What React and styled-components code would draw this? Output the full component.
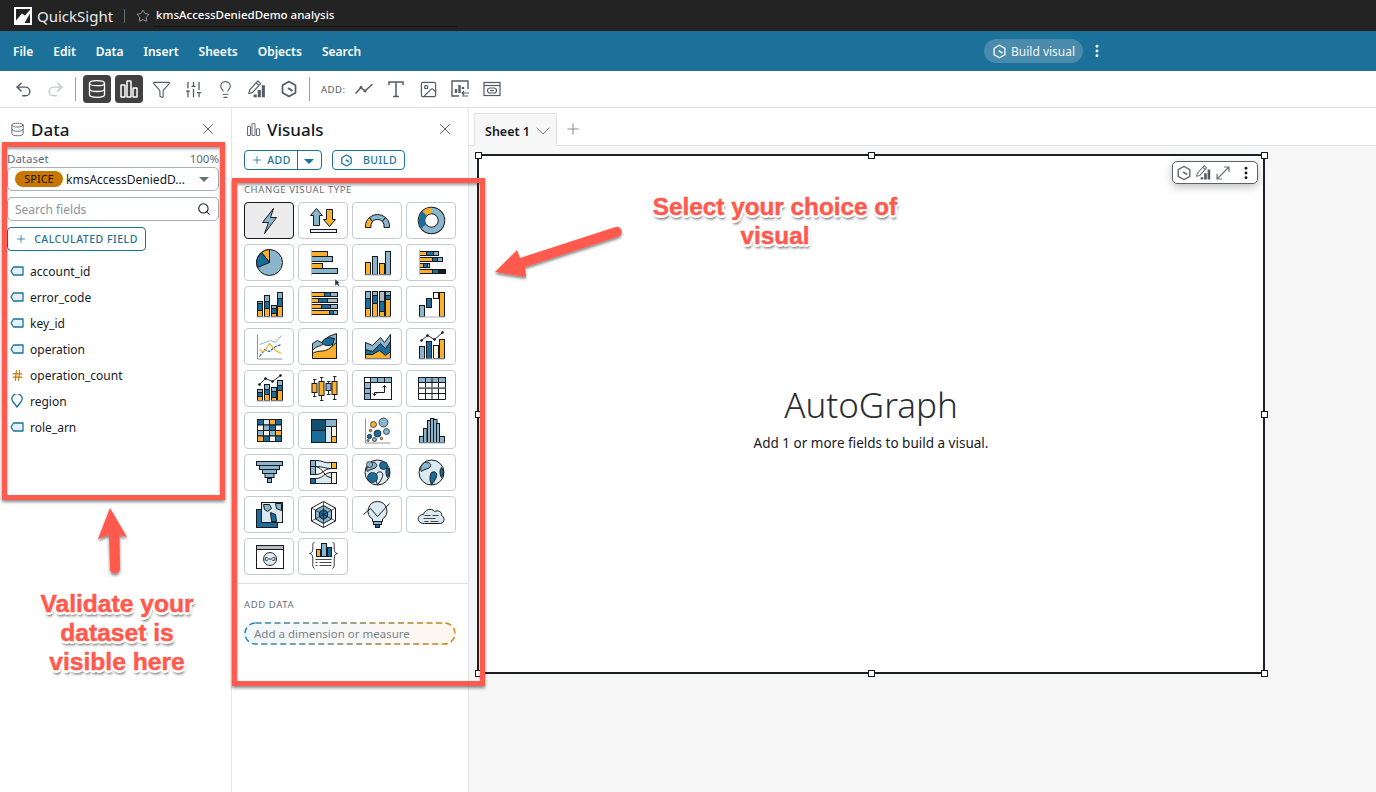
import React from 'react';
import styled, { createGlobalStyle } from 'styled-components';
import {
	ChevronDown, Database, EllipsisVertical, Funnel, Hash, Image, Lightbulb, Plus,
	Redo2, Search, SlidersVertical, Star, Undo2, X,
} from 'lucide-react';

const K = '#16191f';
const O = '#fbb02d';
const B = '#8ab5cb';
const D = '#1a6d99';
const C = '#fbf3e3';
const G = '#b4bcc2';
const L = '#dbeaf1';
const RED = '#ff5a4e';
const BLUE = '#1b7199';

const GlobalStyle = createGlobalStyle`
	html, body { margin: 0; padding: 0; background: #fff; }
	* { box-sizing: border-box; }
	body { font-family: "Noto Sans", "Open Sans", Arial, sans-serif; color: ${K}; }
`;

/* small drawing helpers for the visual type icons */
const R = ({ x, y, w, h, f = B }) => <rect x={x} y={y} width={w} height={h} fill={f} stroke={K} strokeWidth="1" />;
const P = ({ d, f = 'none', s = K, w = 1 }) => <path d={d} fill={f} stroke={s} strokeWidth={w} strokeLinejoin="round" />;
const Dot = ({ x, y, r = 1, f = K }) => <circle cx={x} cy={y} r={r} fill={f} stroke={K} strokeWidth="0.7" />;
const Base = () => <path d="M2 27.5H28.5" stroke={G} strokeWidth="1.2" />;
const Axis = () => <path d="M3 3V27.5H28" fill="none" stroke="#8d969d" strokeWidth="1" />;

const VStack = ({ x, w, segs, base = 27 }) => {
	let y = base;
	return segs.map(([h, f], i) => {
		y -= h;
		return <R key={i} x={x} y={y} w={w} h={h} f={f} />;
	});
};

const HStack = ({ y, h, segs, left = 3 }) => {
	let x = left;
	return segs.map(([w, f], i) => {
		const part = <R key={i} x={x} y={y} w={w} h={h} f={f} />;
		x += w;
		return part;
	});
};

const Globe = ({ spots }) => (
	<>
		<circle cx="15" cy="15" r="12.5" fill={L} stroke={K} strokeWidth="1" />
		<P d="M8 5C12 4 15 6 14 9C12 12 8 11 5 14C3 11 5 7 8 5Z" f={B} />
		<P d="M15 15C19 13 21 16 20 19C19 22 17 25 15 27C13 23 13 18 15 15Z" f={spots ? L : D} />
		<P d="M25 10C28 13 27 18 25 20C23 17 23 12 25 10Z" f={D} />
		{spots && <Dot x={21} y={8} r={4} f={D} />}
		{spots && <Dot x={10} y={20} r={5} f={D} />}
		{spots && <Dot x={7} y={7} r={3} f={B} />}
	</>
);

const VISUAL_ICONS = [
	<P d="M19 3L8 17H14L10 28L22 12H16Z" f={B} w={1} />,
	<>
		<P d="M8 3L14 10H11V20H5V10H2Z" f={B} />
		<P d="M21 21L27 14H24V4H18V14H15Z" f={O} />
		<R x={2} y={24} w={26} h={3} f="#eef2f4" />
	</>,
	<>
		<P d="M3 22A12 12 0 0 1 7 12L10 16A7 7 0 0 0 8.5 22Z" f={O} />
		<P d="M7 12A12 12 0 0 1 23 12L20 16A7 7 0 0 0 10 16Z" f={B} />
		<P d="M23 12A12 12 0 0 1 27 22H21.5A7 7 0 0 0 20 16Z" f={B} />
	</>,
	<>
		<circle cx="15" cy="15" r="10" fill="none" stroke={K} strokeWidth="7.5" />
		<circle cx="15" cy="15" r="10" fill="none" stroke={B} strokeWidth="5.6" />
		<path d="M15 5A10 10 0 0 0 8 8" fill="none" stroke={O} strokeWidth="5.6" />
		<path d="M8 8A10 10 0 0 0 7 21" fill="none" stroke={D} strokeWidth="5.6" />
	</>,
	<>
		<circle cx="15" cy="15" r="13" fill={B} stroke={K} strokeWidth="1" />
		<P d="M15 15L15 2A13 13 0 0 0 7 5Z" f={O} />
		<P d="M15 15L7 5A13 13 0 0 0 3 20Z" f={D} />
	</>,
	<>
		<R x={3} y={4} w={16} h={5} f={O} />
		<R x={3} y={9} w={21} h={5} f={B} />
		<R x={3} y={16} w={11} h={5} f={O} />
		<R x={3} y={21} w={26} h={5} f={B} />
		<path d="M3 2V28" stroke={G} strokeWidth="1.2" />
	</>,
	<>
		<R x={3} y={15} w={5} h={12} f={O} />
		<R x={10} y={9} w={5} h={18} f={B} />
		<R x={17} y={16} w={5} h={11} f={O} />
		<R x={23} y={4} w={5} h={23} f={B} />
		<Base />
	</>,
	<>
		<HStack y={4} h={4} segs={[[7, O], [7, D], [5, B]]} />
		<HStack y={10} h={4} segs={[[13, O], [5, D], [5, B]]} />
		<HStack y={16} h={4} segs={[[4, O], [4, D], [2, B]]} />
		<HStack y={22} h={4} segs={[[13, O], [6, D], [7, K]]} />
		<path d="M3 2V28" stroke={G} strokeWidth="1.2" />
	</>,
	<>
		<VStack x={3} w={5} segs={[[6, O], [7, D], [2, B]]} />
		<VStack x={10} w={5} segs={[[8, O], [7, D], [6, B]]} />
		<VStack x={17} w={5} segs={[[3, O], [5, D], [3, B]]} />
		<VStack x={23} w={5} segs={[[10, O], [8, D], [6, B]]} />
		<Base />
	</>,
	<>
		<HStack y={3} h={4} segs={[[13, O], [6, D], [7, B]]} />
		<HStack y={9} h={4} segs={[[7, O], [9, D], [10, G]]} />
		<HStack y={15} h={4} segs={[[10, O], [9, D], [7, B]]} />
		<HStack y={21} h={4} segs={[[18, O], [4, D], [4, B]]} />
		<path d="M3 1V27" stroke={G} strokeWidth="1.2" />
	</>,
	<>
		<VStack x={3} w={5} segs={[[8, O], [10, D], [7, B]]} />
		<VStack x={10} w={5} segs={[[13, O], [8, D], [4, B]]} />
		<VStack x={17} w={5} segs={[[5, O], [10, D], [10, G]]} />
		<VStack x={23} w={5} segs={[[17, O], [4, D], [4, B]]} />
		<Base />
	</>,
	<>
		<R x={3} y={16} w={5} h={11} f={B} />
		<R x={10} y={9} w={5} h={9} f={D} />
		<R x={17} y={3} w={5} h={6} f={C} />
		<R x={23} y={3} w={5} h={24} f={O} />
		<Base />
	</>,
	<>
		<Axis />
		<path d="M5 13L11 11L16 9L21 11L27 4" fill="none" stroke={B} strokeWidth="1" />
		<path d="M5 25L10 18L15 20L21 15L27 13" fill="none" stroke={D} strokeWidth="1.2" strokeDasharray="3 1" />
		<path d="M5 18L9 21L15 12L21 19L27 22" fill="none" stroke={O} strokeWidth="1.2" />
	</>,
	<>
		<P d="M4 27V12L9 9L13 11L20 5L28 2V27Z" f={B} />
		<P d="M4 19C8 14 12 15 14 13C17 8 22 8 24 11V27H4Z" f={C} />
		<P d="M13 11C17 5 22 6 26 7L24 13C20 15 15 14 13 11Z" f={D} />
		<P d="M4 27V22C9 19 13 20 17 19C21 18 24 14 28 11V27Z" f={O} />
	</>,
	<>
		<P d="M3 27V11L10 14L18 6L22 11L28 3V27Z" f={B} />
		<P d="M3 27V18L10 20L18 12L23 17L28 10V27Z" f={D} />
		<P d="M3 27V23L10 23L17 19L23 24L28 20V27Z" f={O} />
		<Base />
	</>,
	<>
		<R x={3} y={15} w={5} h={12} f={B} />
		<R x={10} y={10} w={5} h={17} f={D} />
		<R x={17} y={14} w={5} h={13} f={C} />
		<R x={23} y={8} w={5} h={19} f={O} />
		<path d="M5 9L11 4L18 8L26 1" fill="none" stroke={K} strokeWidth="0.9" />
		<Dot x={5} y={9} /><Dot x={11} y={4} /><Dot x={18} y={8} /><Dot x={26} y={1} />
		<Base />
	</>,
	<>
		<VStack x={3} w={5} segs={[[4, O], [4, D], [3, B]]} />
		<VStack x={10} w={5} segs={[[6, O], [5, D], [5, B]]} />
		<VStack x={17} w={5} segs={[[3, O], [6, D], [4, B]]} />
		<VStack x={23} w={5} segs={[[10, O], [5, D], [5, B]]} />
		<path d="M5 11L11 5L18 8L26 2" fill="none" stroke={K} strokeWidth="0.9" />
		<Dot x={5} y={11} /><Dot x={11} y={5} /><Dot x={18} y={8} /><Dot x={26} y={2} />
		<Base />
	</>,
	<>
		<path d="M6 6V23M13 4V27M20 8V21M26 3V26M4.5 6H8M11.5 4H15M18.5 8H22M24.5 3H28M4.5 23H8M11.5 27H15M18.5 21H22M24.5 26H28" stroke={K} strokeWidth="0.9" fill="none" />
		<R x={3.5} y={10} w={5} h={9} f={O} />
		<R x={10.5} y={8} w={5} h={14} f={O} />
		<R x={17.5} y={10} w={5} h={7} f={B} />
		<R x={23.5} y={8} w={5} h={13} f={O} />
	</>,
	<>
		<R x={2} y={4} w={27} h={22} f="#fff" />
		<R x={2} y={4} w={6} h={5} f="#fff" />
		<R x={8} y={4} w={7} h={5} f={B} />
		<R x={15} y={4} w={7} h={5} f={B} />
		<R x={22} y={4} w={7} h={5} f={B} />
		<R x={2} y={9} w={6} h={6} f={B} />
		<R x={2} y={15} w={6} h={5} f={B} />
		<R x={2} y={20} w={6} h={6} f={B} />
		<P d="M12 22V19H22V12M20 14L22 12L24 14M14 20L12 22L10 20" w={1} />
	</>,
	<>
		<R x={2} y={4} w={27} h={5} f={B} />
		<path d="M2 9H29V26H2ZM2 15H29M2 20H29M9 4V26M15.5 4V26M22 4V26" fill="none" stroke={K} strokeWidth="1" />
		<path d="M2 14.5H29" stroke="#777" strokeWidth="1.6" />
	</>,
	<>
		{[
			[D, L, O, D], [C, B, D, C], [B, C, B, O], [O, D, C, D],
		].map((row, y) => row.map((f, x) => <R key={`${x}-${y}`} x={3 + x * 6} y={4 + y * 5.5} w={6} h={5.5} f={f} />))}
	</>,
	<>
		<R x={3} y={4} w={14} h={11} f="#134f6e" />
		<R x={3} y={15} w={14} h={12} f={D} />
		<R x={17} y={4} w={11} h={7} f={B} />
		<R x={17} y={11} w={6} h={16} f={L} />
		<R x={23} y={11} w={5} h={10} f={C} />
		<R x={23} y={21} w={5} h={6} f={O} />
	</>,
	<>
		<Axis />
		<Dot x={11} y={9} r={3} f={O} />
		<Dot x={21} y={7} r={4.5} f={B} />
		<Dot x={8} y={15} r={1.2} f={O} />
		<Dot x={15} y={18} r={3.5} f={D} />
		<Dot x={24} y={16} r={3} f={B} />
		<Dot x={7} y={21} r={2.2} f={D} />
		<Dot x={12} y={24} r={2} f={B} />
		<Dot x={19} y={23} r={1.2} f={O} />
		<Dot x={5.5} y={25} r={1} f={O} />
	</>,
	<>
		{[[3, 21], [7, 13], [11, 5], [14, 3], [17, 4], [20, 8], [23, 21]].map(([x, y], i) => (
			<R key={i} x={x} y={y} w={i === 6 ? 5 : i === 0 ? 4 : i === 5 ? 3 : 3.5} h={27 - y} f={B} />
		))}
		<Base />
	</>,
	<>
		<R x={2} y={4} w={26} h={4} f={B} />
		<R x={5} y={8} w={20} h={4} f={B} />
		<R x={8} y={12} w={14} h={4} f={B} />
		<R x={10.5} y={16} w={9} h={4} f={B} />
		<R x={13} y={21} w={4} h={4} f={B} />
	</>,
	<>
		<R x={2} y={3} w={5} h={6} f={B} />
		<R x={2} y={9} w={5} h={8} f={B} />
		<R x={2} y={21} w={5} h={5} f={D} />
		<R x={23} y={5} w={5} h={6} f={O} />
		<R x={23} y={15} w={5} h={11} f={C} />
		<P d="M7 3C15 3 15 6 23 5V11C15 11 15 9 7 9Z" f={L} />
		<P d="M7 21C15 21 15 15 23 15V26C15 26 15 26 7 26Z" f={L} />
		<P d="M7 9C15 10 15 20 23 20M7 17C15 17 15 11 23 11" />
	</>,
	<Globe spots />,
	<Globe />,
	<>
		<R x={2} y={10} w={21} h={18} f={D} />
		<R x={7} y={3} w={21} h={20} f={L} />
		<P d="M9 5H15L17 9L13 12L10 10Z" f={B} />
		<P d="M16 13L21 15L22 22H17Z" f={D} />
		<P d="M21 4H27V11L22 9Z" f={B} />
	</>,
	<>
		<P d="M15 2L27 8.5V21.5L15 28L3 21.5V8.5Z" f="#fff" />
		<P d="M15 6L23 10.5V19.5L15 24L7 19.5V10.5Z" f={B} />
		<P d="M15 10L19 12.5V17.5L15 20L11 17.5V12.5Z" f={D} />
		<path d="M15 2V28M3 8.5L27 21.5M27 8.5L3 21.5" stroke={K} strokeWidth="0.7" />
	</>,
	<>
		<P d="M15 2A9.5 9.5 0 0 1 20 19.5V22H10V19.5A9.5 9.5 0 0 1 15 2Z" f={L} />
		<R x={11} y={22} w={8} h={3} f={B} />
		<R x={13} y={25} w={4} h={3} f={D} />
		<path d="M1 15L8 9L15 17L27 4" fill="none" stroke={K} strokeWidth="1" />
	</>,
	<>
		<P d="M8 24C3 24 1 21 2 18C3 15 6 15 7 15C8 10 15 8 18 12C22 10 26 13 25 16C28 17 29 23 24 24Z" f={L} />
		<path d="M8 16H14M16 16H22M7 19H19M8 22H12M14 22H22" stroke={K} strokeWidth="0.8" />
	</>,
	<>
		<R x={2} y={4} w={27} h={4} f={G} />
		<R x={2} y={8} w={27} h={19} f="#fff" />
		<circle cx="15.5" cy="17.5" r="6.5" fill={L} stroke={K} strokeWidth="0.9" />
		<path d="M13 16H12A1.5 1.5 0 0 0 12 19H13M18 16H19A1.5 1.5 0 0 1 19 19H18M13 17.5H18" fill="none" stroke={K} strokeWidth="0.9" />
	</>,
	<>
		<P d="M6 1C3 1 5 6 4 9C4 11 2 12 1 12C2 12 4 13 4 15C5 19 3 26 6 27M24 1C27 1 25 6 26 9C26 11 28 12 29 12C28 12 26 13 26 15C25 19 27 26 24 27" w={0.9} />
		<R x={8} y={8} w={4} h={7} f={O} />
		<R x={13} y={2} w={5} h={13} f={B} />
		<R x={19} y={6} w={4} h={9} f={D} />
		<path d="M7 18H23M7 21H9M11 21H23M7 24H9M11 24H23" stroke={K} strokeWidth="0.8" />
	</>,
];

const FIELDS = [
	['account_id', 'tag'], ['error_code', 'tag'], ['key_id', 'tag'], ['operation', 'tag'],
	['operation_count', 'hash'], ['region', 'pin'], ['role_arn', 'tag'],
];

const MENU = ['File', 'Edit', 'Data', 'Insert', 'Sheets', 'Objects', 'Search'];

const HexBuild = ({ size = 18, color = 'currentColor' }) => (
	<svg width={size} height={size} viewBox="0 0 18 18" fill="none" stroke={color} strokeWidth="1.700" strokeLinejoin="round">
		<path d="M9 1.500L15.500 5.200V12.800L9 16.500L2.500 12.800V5.200Z" />
		<path d="M8 8L12.500 10.800" strokeWidth="2" />
	</svg>
);

const PenBars = ({ size = 22 }) => (
	<svg width={size} height={size} viewBox="0 0 22 22" fill="none" stroke="currentColor" strokeWidth="1.300" strokeLinejoin="round">
		<path d="M2 16L3 12L12 2L15 5L6 15Z" />
		<path d="M10 4L13 7" />
		<path d="M9 20V17M13.500 20V12M18 20V7" strokeWidth="3.400" stroke="#545b64" />
	</svg>
);

const BarsIcon = ({ size = 20, color = 'currentColor', width = 1.500 }) => (
	<svg width={size} height={size} viewBox="0 0 20 20" fill="none" stroke={color} strokeWidth={width}>
		<rect x="2" y="6" width="4" height="12" rx="0.500" />
		<rect x="8" y="2" width="4" height="16" rx="0.500" />
		<rect x="14" y="9" width="4" height="9" rx="0.500" />
	</svg>
);

const TagIcon = () => (
	<svg width="14" height="12" viewBox="0 0 14 12" fill="#e4f0f6" stroke={BLUE} strokeWidth="1.300" strokeLinejoin="round">
		<path d="M3.500 2H13V10H3.500L1 6Z" />
	</svg>
);

const PinIcon = () => (
	<svg width="12" height="14" viewBox="0 0 12 14" fill="#fff" stroke={BLUE} strokeWidth="1.300" strokeLinejoin="round">
		<path d="M6 13L1.800 7.500A5 5 0 1 1 10.200 7.500Z" />
	</svg>
);

const LogoMark = () => (
	<svg width="18" height="18" viewBox="0 0 18 18">
		<rect width="18" height="18" fill="#fff" />
		<path d="M2 2H16V3L11 8.500L8 6.500L2 13.500Z" fill="#232323" />
		<path d="M16 6.500V16H10.500Z" fill="#232323" />
	</svg>
);

const LineAdd = () => (
	<svg width="18" height="18" viewBox="0 0 18 18" fill="none" stroke="#545b64" strokeWidth="1.500" strokeLinecap="round" strokeLinejoin="round">
		<path d="M1 13L6 7.500L10 11L17 4.500" />
		<circle cx="6" cy="7.500" r="0.700" fill="#545b64" />
		<circle cx="10" cy="11" r="0.700" fill="#545b64" />
	</svg>
);

const SerifT = () => (
	<svg width="18" height="18" viewBox="0 0 18 18" fill="none" stroke="#545b64" strokeWidth="1.500" strokeLinejoin="miter">
		<path d="M2 5V2H16V5M9 2V16.500M6 16.500H12" />
	</svg>
);

const ChartSwap = () => (
	<svg width="20" height="20" viewBox="0 0 20 20" fill="none" stroke="#545b64" strokeWidth="1.400">
		<path d="M9 17H2V2H18V10" />
		<path d="M6 14V10M9.500 14V6M13 10V8" strokeWidth="2.400" />
		<path d="M12 14H19M14 12L12 14L14 16M12 17H18" strokeWidth="1.100" />
	</svg>
);

const EmbedIcon = () => (
	<svg width="18" height="18" viewBox="0 0 18 18" fill="none" stroke="#545b64" strokeWidth="1.200">
		<rect x="1" y="2.500" width="16" height="13" />
		<path d="M1 5.500H17" />
		<rect x="4.500" y="8" width="9" height="5" rx="2.500" />
		<path d="M7 10.500H11" />
	</svg>
);

const Page = styled.div`
	position: relative;
	width: 1376px;
	height: 792px;
	overflow: hidden;
	display: flex;
	flex-direction: column;
	background: #fff;
`;

const TopBar = styled.header`
	height: 31px;
	background: #232323;
	display: flex;
	align-items: center;
	padding-left: 14px;
	color: #fff;
`;

const Brand = styled.span`
	font-size: 15px;
	margin-left: 5px;
	color: #eaeaea;
`;

const BarDivider = styled.span`
	width: 1px;
	height: 14px;
	background: #6b6b6b;
	margin: 0 11px 0 11px;
`;

const TitleWrap = styled.div`
	display: flex;
	align-items: center;
	color: #aab0b5;
`;

const AnalysisTitle = styled.span`
	font-size: 11.500px;
	font-weight: 500;
	line-height: 16px;
	color: #fff;
	width: 304px;
	margin: 3px 0 0 3px;
	padding: 0 0 3px 3px;
	border-bottom: 1px solid #111;
`;

const MenuBar = styled.nav`
	height: 40px;
	background: ${BLUE};
	display: flex;
	align-items: center;
	padding: 0 271px 0 13px;
	gap: 20px;
`;

const MenuItem = styled.span`
	font-size: 12px;
	font-weight: 600;
	color: #fff;
`;

const BuildPill = styled.div`
	margin-left: auto;
	height: 24px;
	width: 99px;
	border-radius: 12px;
	background: #4a8bab;
	color: #f2f7fa;
	font-size: 12px;
	display: flex;
	align-items: center;
	gap: 4px;
	padding-left: 8px;
`;

const MenuDots = styled.div`
	margin-left: -14px;
	display: flex;
	color: #fff;
	width: 16px;
`;

const Toolbar = styled.div`
	height: 37px;
	border-bottom: 1px solid #dfe2e4;
	display: flex;
	align-items: center;
	padding-left: 7px;
	color: #545b64;
`;

const ToolCell = styled.div`
	width: 32px;
	height: 28px;
	display: flex;
	align-items: center;
	justify-content: center;
	color: ${(p) => (p.$muted ? '#c3c8cc' : '#545b64')};
`;

const ToolActive = styled.div`
	width: 28px;
	height: 28px;
	border-radius: 4px;
	background: #414141;
	color: #fff;
	display: flex;
	align-items: center;
	justify-content: center;
`;

const ToolDivider = styled.span`
	width: 1px;
	height: 24px;
	background: #9aa0a5;
	margin: 0 ${(p) => p.$after}px 0 4px;
`;

const AddLabel = styled.span`
	font-size: 9.500px;
	letter-spacing: 0.500px;
	color: #545b64;
	width: 27px;
`;

const Main = styled.main`
	flex: 1;
	display: flex;
	min-height: 0;
`;

const Panel = styled.section`
	width: ${(p) => p.$width}px;
	border-right: 1px solid #e3e5e7;
	display: flex;
	flex-direction: column;
	flex-shrink: 0;
`;

const PanelHead = styled.div`
	height: 42px;
	display: flex;
	align-items: center;
	padding: 0 14px 0 ${(p) => p.$left}px;
	gap: 6px;
`;

const PanelTitle = styled.h2`
	flex: 1;
	margin: 0;
	font-size: 17px;
	font-weight: 500;
	color: ${K};
`;

const CloseBtn = styled.span`
	display: flex;
	color: #545b64;
`;

const DataBody = styled.div`
	padding: 0 12px 0 7px;
	display: flex;
	flex-direction: column;
`;

const DatasetRow = styled.div`
	display: flex;
	justify-content: space-between;
	font-size: 11.500px;
	line-height: 17px;
	color: #5f6b7a;
`;

const FieldBox = styled.div`
	height: 24px;
	margin-bottom: 6px;
	border: 1px solid #aab2b8;
	border-radius: 5px;
	display: flex;
	align-items: center;
	padding: 0 7px;
	font-size: 12px;
`;

const SpiceBadge = styled.span`
	width: 48px;
	height: 16px;
	border-radius: 8px;
	background: #c77700;
	color: #1c1306;
	font-size: 11px;
	text-align: center;
	line-height: 16px;
	margin-right: 3px;
	flex-shrink: 0;
`;

const DatasetName = styled.span`
	flex: 1;
	white-space: nowrap;
	font-size: 12px;
`;

const Caret = styled.span`
	width: 0;
	height: 0;
	border-left: ${(p) => p.$size}px solid transparent;
	border-right: ${(p) => p.$size}px solid transparent;
	border-top: ${(p) => p.$size}px solid ${(p) => p.$color};
	margin-right: 2px;
`;

const Placeholder = styled.span`
	flex: 1;
	color: #8b949c;
	font-size: 12px;
`;

const OutlineBtn = styled.button`
	height: ${(p) => p.$height}px;
	width: ${(p) => p.$width}px;
	padding: 0;
	border: 1px solid ${BLUE};
	border-radius: 4px;
	background: #fff;
	color: ${BLUE};
	font: 500 10.500px "Noto Sans", Arial, sans-serif;
	letter-spacing: 0.500px;
	display: flex;
	align-items: center;
	justify-content: center;
	gap: ${(p) => p.$gap}px;
`;

const FieldList = styled.ul`
	list-style: none;
	margin: 7px 0 0;
	padding: 0 0 0 3px;
`;

const FieldRow = styled.li`
	height: 26px;
	display: flex;
	align-items: center;
	gap: 6px;
	font-size: 12px;
	color: #16191f;
`;

const FieldIcon = styled.span`
	width: 14px;
	display: flex;
	justify-content: center;
`;

const VisualsBody = styled.div`
	padding: 0 12px;
	display: flex;
	flex-direction: column;
`;

const BtnRow = styled.div`
	display: flex;
	gap: 10px;
	height: 20px;
`;

const SplitBtn = styled.div`
	display: flex;
	width: 78px;
	height: 20px;
	border: 1px solid ${BLUE};
	border-radius: 4px;
	color: ${BLUE};
	font-size: 10.500px;
	font-weight: 500;
	letter-spacing: 0.500px;
`;

const SplitMain = styled.span`
	flex: 1;
	display: flex;
	align-items: center;
	justify-content: center;
	gap: 4px;
	border-right: 1px solid ${BLUE};
`;

const SplitSide = styled.span`
	width: 23px;
	display: flex;
	align-items: center;
	justify-content: center;
	padding-top: 3px;
`;

const SectionLabel = styled.div`
	font-size: 9.500px;
	letter-spacing: 0.600px;
	color: #687078;
	line-height: 12px;
	margin: ${(p) => p.$top}px 0 ${(p) => p.$bottom}px;
`;

const VisualGrid = styled.div`
	display: grid;
	grid-template-columns: repeat(4, 50px);
	grid-auto-rows: 37px;
	gap: 5px 4px;
`;

const VisualCell = styled.div`
	border: 1px solid ${(p) => (p.$selected ? K : '#c6cbcf')};
	border-radius: 4px;
	background: ${(p) => (p.$selected ? '#ececec' : '#fff')};
	display: flex;
	align-items: center;
	justify-content: center;
`;

const Separator = styled.hr`
	border: 0;
	border-top: 1px solid #dfe2e4;
	margin: 8px 0 0;
`;

const DropZone = styled.div`
	position: relative;
	margin: 1px 12px 0;
	height: 23px;
	border-radius: 12px;
	background: linear-gradient(90deg, #f0f7fc, #fff7f0);
	display: flex;
	align-items: center;
	padding-left: 10px;
	font-size: 11.500px;
	color: #7b838a;
`;

const DropOutline = styled.svg`
	position: absolute;
	inset: 0;
`;

const CanvasArea = styled.section`
	flex: 1;
	display: flex;
	flex-direction: column;
	background: #f7f7f7;
`;

const TabBar = styled.div`
	height: 38px;
	background: #fff;
	border-bottom: 1px solid #e0e2e4;
	display: flex;
	align-items: flex-end;
	padding-left: 5px;
`;

const SheetTab = styled.div`
	width: 83px;
	height: 33px;
	margin-bottom: -1px;
	border: 1px solid #e0e2e4;
	border-bottom-color: #f7f7f7;
	background: #f7f7f7;
	display: flex;
	align-items: center;
	padding: 3px 0 0 10px;
	gap: 1px;
	font-size: 12.500px;
	font-weight: 600;
	white-space: nowrap;

	svg {
		flex-shrink: 0;
	}
`;

const AddTab = styled.span`
	display: flex;
	color: #8a9197;
	margin: 0 0 7px 7px;
`;

const CanvasBody = styled.div`
	flex: 1;
	padding: 8px 0 0 8px;
`;

const VisualFrame = styled.div`
	position: relative;
	width: 788px;
	height: 520px;
	border: 2px solid #1d2024;
	background: #fff;
	display: flex;
	flex-direction: column;
	align-items: center;
	justify-content: center;
	padding-top: 8px;
`;

const Handle = styled.span`
	position: absolute;
	left: ${(p) => p.$x}%;
	top: ${(p) => p.$y}%;
	width: 7px;
	height: 7px;
	margin: ${(p) => (p.$y === 0 ? -4.5 : p.$y === 100 ? -2.5 : -3.5)}px 0 0 ${(p) => (p.$x === 0 ? -4.5 : p.$x === 100 ? -2.5 : -3.5)}px;
	border: 1.500px solid #16191f;
	background: #fff;
`;

const WidgetBar = styled.div`
	position: absolute;
	top: 5px;
	right: 5px;
	width: 86px;
	height: 23px;
	border: 1px solid #5b6168;
	border-radius: 5px;
	background: #fff;
	box-shadow: 0 3px 8px rgba(0, 0, 0, 0.25);
	display: flex;
	align-items: center;
	padding-left: 3px;
	gap: 3px;
	color: #6b7278;
`;

const DotsGap = styled.span`
	display: flex;
	margin-left: 4px;
	color: ${K};
`;

const AutoTitle = styled.div`
	font-size: 35px;
	font-weight: 300;
	line-height: 44px;
	color: #2a2e33;
`;

const AutoHint = styled.div`
	font-size: 13.500px;
	line-height: 20px;
	margin-top: 6px;
	color: #16191f;
`;

const Highlight = styled.div`
	position: absolute;
	left: ${(p) => p.$left}px;
	top: ${(p) => p.$top}px;
	width: ${(p) => p.$w}px;
	height: ${(p) => p.$h}px;
	border: 5px solid ${RED};
	box-shadow: 0 2px 3px rgba(40, 40, 40, 0.55), inset 0 2px 3px rgba(40, 40, 40, 0.45);
	pointer-events: none;
`;

const Note = styled.div`
	position: absolute;
	left: ${(p) => p.$left}px;
	top: ${(p) => p.$top}px;
	width: ${(p) => p.$w}px;
	text-align: center;
	font-family: "Liberation Sans", Arial, sans-serif;
	font-weight: 700;
	font-size: ${(p) => p.$size}px;
	line-height: 29px;
	color: ${RED};
	-webkit-text-stroke: 0.500px ${RED};
	text-shadow:
		-2.500px 0 0 #fff, 2.500px 0 0 #fff, 0 -2.500px 0 #fff, 0 2.500px 0 #fff,
		-2px -2px 0 #fff, 2px -2px 0 #fff, -2px 2px 0 #fff, 2px 2px 0 #fff,
		1px 4px 3px rgba(0, 0, 0, 0.7);
`;

const ArrowArt = styled.svg`
	position: absolute;
	left: 0;
	top: 0;
	pointer-events: none;
`;

const HANDLES = [[0, 0], [50, 0], [100, 0], [0, 50], [100, 50], [0, 100], [50, 100], [100, 100]];

const fieldIcon = (kind) => {
	if (kind === 'hash') return <Hash size={13} color="#c77700" strokeWidth={2} />;
	if (kind === 'pin') return <PinIcon />;
	return <TagIcon />;
};

export default function App() {
	return (
		<Page>
			<GlobalStyle />
			<TopBar>
				<LogoMark />
				<Brand>QuickSight</Brand>
				<BarDivider />
				<TitleWrap>
					<Star size={14} strokeWidth={1.4} />
					<AnalysisTitle>kmsAccessDeniedDemo analysis</AnalysisTitle>
				</TitleWrap>
			</TopBar>

			<MenuBar>
				{MENU.map((item) => <MenuItem key={item}>{item}</MenuItem>)}
				<BuildPill><HexBuild size={15} />Build visual</BuildPill>
				<MenuDots><EllipsisVertical size={16} strokeWidth={2.4} /></MenuDots>
			</MenuBar>

			<Toolbar>
				<ToolCell><Undo2 size={19} strokeWidth={1.8} /></ToolCell>
				<ToolCell $muted><Redo2 size={19} strokeWidth={1.8} /></ToolCell>
				<ToolDivider $after={5} />
				<ToolCell><ToolActive><Database size={20} strokeWidth={1.6} /></ToolActive></ToolCell>
				<ToolCell><ToolActive><BarsIcon /></ToolActive></ToolCell>
				<ToolCell><Funnel size={19} strokeWidth={1.4} /></ToolCell>
				<ToolCell><SlidersVertical size={19} strokeWidth={1.6} /></ToolCell>
				<ToolCell><Lightbulb size={19} strokeWidth={1.4} /></ToolCell>
				<ToolCell><PenBars size={20} /></ToolCell>
				<ToolCell><HexBuild /></ToolCell>
				<ToolDivider $after={11} />
				<AddLabel>ADD:</AddLabel>
				<ToolCell><LineAdd /></ToolCell>
				<ToolCell><SerifT /></ToolCell>
				<ToolCell><Image size={19} strokeWidth={1.5} /></ToolCell>
				<ToolCell><ChartSwap /></ToolCell>
				<ToolCell><EmbedIcon /></ToolCell>
			</Toolbar>

			<Main>
				<Panel $width={232}>
					<PanelHead $left={10}>
						<Database size={15} color="#545b64" strokeWidth={1.4} />
						<PanelTitle>Data</PanelTitle>
						<CloseBtn><X size={18} strokeWidth={1.3} /></CloseBtn>
					</PanelHead>
					<DataBody>
						<DatasetRow><span>Dataset</span><span>100%</span></DatasetRow>
						<FieldBox>
							<SpiceBadge>SPICE</SpiceBadge>
							<DatasetName>kmsAccessDeniedD...</DatasetName>
							<Caret $size={5} $color="#687078" />
						</FieldBox>
						<FieldBox>
							<Placeholder>Search fields</Placeholder>
							<Search size={14} color={K} strokeWidth={1.8} />
						</FieldBox>
						<OutlineBtn $width={139} $height={24} $gap={7}>
							<Plus size={12} strokeWidth={1.6} />CALCULATED FIELD
						</OutlineBtn>
						<FieldList>
							{FIELDS.map(([name, kind]) => (
								<FieldRow key={name}>
									<FieldIcon>{fieldIcon(kind)}</FieldIcon>{name}
								</FieldRow>
							))}
						</FieldList>
					</DataBody>
				</Panel>

				<Panel $width={237}>
					<PanelHead $left={14}>
						<BarsIcon size={15} color="#545b64" width={1.2} />
						<PanelTitle>Visuals</PanelTitle>
						<CloseBtn><X size={18} strokeWidth={1.3} /></CloseBtn>
					</PanelHead>
					<VisualsBody>
						<BtnRow>
							<SplitBtn>
								<SplitMain><Plus size={12} strokeWidth={1.6} />ADD</SplitMain>
								<SplitSide><Caret $size={5} $color={BLUE} /></SplitSide>
							</SplitBtn>
							<OutlineBtn $width={73} $height={20} $gap={10}><HexBuild size={13} />BUILD</OutlineBtn>
						</BtnRow>
						<SectionLabel $top={14} $bottom={6}>CHANGE VISUAL TYPE</SectionLabel>
						<VisualGrid>
							{VISUAL_ICONS.map((icon, i) => (
								<VisualCell key={i} $selected={i === 0}>
									<svg width="30" height="31" viewBox="-0.5 -0.5 30 31">{icon}</svg>
								</VisualCell>
							))}
						</VisualGrid>
					</VisualsBody>
					<Separator />
					<VisualsBody>
						<SectionLabel $top={15} $bottom={10}>ADD DATA</SectionLabel>
					</VisualsBody>
					<DropZone>
						<DropOutline width="212" height="23" viewBox="0 0 212 23">
							<defs>
								<linearGradient id="dropStroke" x1="0" x2="1" y1="0" y2="0">
									<stop offset="0" stopColor="#2a86b8" />
									<stop offset="1" stopColor="#d2850f" />
								</linearGradient>
							</defs>
							<rect x="1" y="1" width="210" height="21" rx="10.500" fill="none" stroke="url(#dropStroke)" strokeWidth="1.500" strokeDasharray="6 3.500" />
						</DropOutline>
						Add a dimension or measure
					</DropZone>
				</Panel>

				<CanvasArea>
					<TabBar>
						<SheetTab>Sheet 1<ChevronDown size={24} color="#6b7278" strokeWidth={0.9} /></SheetTab>
						<AddTab><Plus size={18} strokeWidth={1.4} /></AddTab>
					</TabBar>
					<CanvasBody>
						<VisualFrame>
							{HANDLES.map(([x, y]) => <Handle key={`${x}-${y}`} $x={x} $y={y} />)}
							<WidgetBar>
								<HexBuild size={16} />
								<PenBars size={17} />
								<svg width="16" height="16" viewBox="0 0 16 16" fill="none" stroke="currentColor" strokeWidth="1.200">
									<path d="M2 14L14 2M9 2H14V7M2 9V14H7" />
								</svg>
								<DotsGap><EllipsisVertical size={16} strokeWidth={2.4} /></DotsGap>
							</WidgetBar>
							<AutoTitle>AutoGraph</AutoTitle>
							<AutoHint>Add 1 or more fields to build a visual.</AutoHint>
						</VisualFrame>
					</CanvasBody>
				</CanvasArea>
			</Main>

			<Highlight $left={2} $top={142} $w={223} $h={358} />
			<Highlight $left={232} $top={178} $w={253} $h={508} />
			<ArrowArt width="1376" height="792" viewBox="0 0 1376 792">
				<defs>
					<filter id="arrowShadow" x="-20%" y="-20%" width="140%" height="140%">
						<feDropShadow dx="0" dy="2" stdDeviation="1.500" floodColor="#000" floodOpacity="0.5" />
					</filter>
				</defs>
				<g filter="url(#arrowShadow)" fill={RED}>
					<path d="M615.500 227A5 5 0 0 1 618.500 236.500L525 267L526 277L495 272L517 250L520 258Z" />
					<path d="M110 508L127 537L119.500 535L120 568A5 5 0 0 1 110 569L109 535L98 539Z" />
				</g>
				<path d="M335 279L335 286L337 284.500L339 286.500L339.500 285L338 283.500L340 283Z" fill="#2a2e33" stroke="#fff" strokeWidth="0.4" />
			</ArrowArt>
			<Note $left={640} $top={192} $w={270} $size={24.3}>Select your choice of visual</Note>
			<Note $left={27} $top={589} $w={180} $size={24.6}>Validate your dataset is visible here</Note>
		</Page>
	);
}
